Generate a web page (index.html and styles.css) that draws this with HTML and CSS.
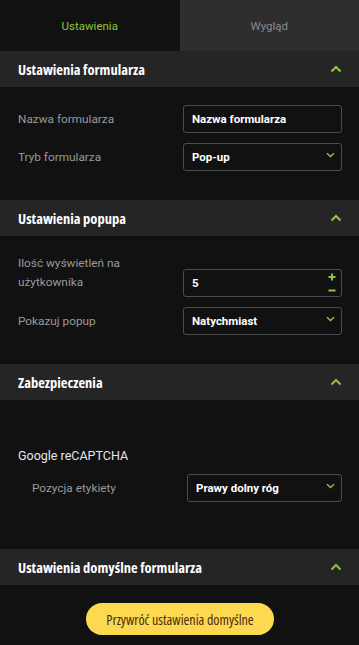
FILE: index.html
```html
<!DOCTYPE html>
<html lang="pl">
<head>
  <meta charset="UTF-8" />
  <title>Ustawienia formularza</title>
  <link rel="stylesheet" href="styles.css">
</head>
<body>
  <div class="panel">
    <!-- Tabs -->
    <div class="tabs">
      <div class="tab active">Ustawienia</div>
      <div class="tab">Wygląd</div>
    </div>

    <!-- Form settings -->
    <section class="group">
      <div class="group-head">
        <h2>Ustawienia formularza</h2>
        <svg class="chev-up" width="12" height="8" viewBox="0 0 12 8"><path d="M1.5 6.5 L6 2 L10.5 6.5" /></svg>
      </div>
      <div class="group-body">
        <div class="field">
          <div class="label">Nazwa formularza</div>
          <div class="control">Nazwa formularza</div>
        </div>
        <div class="field">
          <div class="label">Tryb formularza</div>
          <div class="control select">Pop-up
            <svg class="chev-down" width="9" height="6" viewBox="0 0 9 6"><path d="M1 1.2 L4.5 4.6 L8 1.2" /></svg>
          </div>
        </div>
      </div>
    </section>

    <!-- Popup settings -->
    <section class="group">
      <div class="group-head">
        <h2>Ustawienia popupa</h2>
        <svg class="chev-up" width="12" height="8" viewBox="0 0 12 8"><path d="M1.5 6.5 L6 2 L10.5 6.5" /></svg>
      </div>
      <div class="group-body">
        <div class="field tall">
          <div class="label">Ilość wyświetleń na użytkownika</div>
          <div class="control number">5
            <div class="stepper">
              <svg width="8" height="8" viewBox="0 0 8 8"><path d="M4 0.5 V7.5 M0.5 4 H7.5" /></svg>
              <svg width="8" height="3" viewBox="0 0 8 3"><path d="M0.5 1.5 H7.5" /></svg>
            </div>
          </div>
        </div>
        <div class="field">
          <div class="label">Pokazuj popup</div>
          <div class="control select">Natychmiast
            <svg class="chev-down" width="9" height="6" viewBox="0 0 9 6"><path d="M1 1.2 L4.5 4.6 L8 1.2" /></svg>
          </div>
        </div>
      </div>
    </section>

    <!-- Security -->
    <section class="group">
      <div class="group-head">
        <h2>Zabezpieczenia</h2>
        <svg class="chev-up" width="12" height="8" viewBox="0 0 12 8"><path d="M1.5 6.5 L6 2 L10.5 6.5" /></svg>
      </div>
      <div class="group-body security">
        <div class="sub-title">Google reCAPTCHA</div>
        <div class="field nested">
          <div class="label">Pozycja etykiety</div>
          <div class="control select">Prawy dolny róg
            <svg class="chev-down" width="9" height="6" viewBox="0 0 9 6"><path d="M1 1.2 L4.5 4.6 L8 1.2" /></svg>
          </div>
        </div>
      </div>
    </section>

    <!-- Defaults -->
    <section class="group">
      <div class="group-head">
        <h2>Ustawienia domyślne formularza</h2>
        <svg class="chev-up" width="12" height="8" viewBox="0 0 12 8"><path d="M1.5 6.5 L6 2 L10.5 6.5" /></svg>
      </div>
      <div class="group-body defaults">
        <button class="reset">Przywróć ustawienia domyślne</button>
      </div>
    </section>
  </div>
</body>
</html>
```
FILE: styles.css
```css
/********************************************************
 * Base
 ********************************************************/
body {
  margin: 0;
  background-color: #111111;
  font-family: Roboto, "Noto Sans", sans-serif;
  color: #fff;
}

.panel {
  width: 359px;
  height: 645px;
  overflow: hidden;
}

/********************************************************
 * Tabs
 ********************************************************/
.tabs {
  display: flex;
  height: 51px;
}
.tab {
  flex: 1;
  display: flex;
  align-items: center;
  justify-content: center;
  font-size: 11.5px;
  color: #8a8a8a;
  background-color: #2e2e2e;
  padding-top: 1px;
}
.tab.active {
  color: #8dc63f;
  background-color: #111111;
}

/********************************************************
 * Collapsible groups
 ********************************************************/
.group-head {
  height: 36px;
  display: flex;
  align-items: center;
  justify-content: space-between;
  padding: 0 17px 0 18px;
  background-color: #252525;
}
.group-head h2 {
  margin: 0;
  font-family: "Open Sans", sans-serif;
  font-stretch: condensed;
  font-weight: 700;
  font-size: 14.5px;
  color: #fff;
}
.chev-up path {
  fill: none;
  stroke: #8dc63f;
  stroke-width: 2;
}

.group-body {
  display: flex;
  flex-direction: column;
  gap: 10px;
  padding: 18px 17px 29px 18px;
}

/********************************************************
 * Fields
 ********************************************************/
.field {
  display: flex;
  align-items: center;
  justify-content: space-between;
}
.field.tall {
  align-items: flex-end;
}
.field.tall .label {
  width: 150px;
  line-height: 19px;
  padding-bottom: 5px;
}
.field.nested {
  padding-left: 14px;
}

.label {
  font-size: 11.8px;
  color: #9a9a9a;
}

.control {
  position: relative;
  box-sizing: border-box;
  width: 159px;
  height: 28px;
  display: flex;
  align-items: center;
  padding: 0 8px;
  border: 1px solid #4c4c4c;
  border-radius: 3px;
  font-size: 11.5px;
  font-weight: 700;
  color: #fff;
}
.nested .control {
  width: 155px;
}

.chev-down {
  position: absolute;
  right: 6px;
  top: 8px;
}
.chev-down path {
  fill: none;
  stroke: #8dc63f;
  stroke-width: 1.4;
}

.stepper {
  position: absolute;
  right: 5px;
  top: 3px;
  display: flex;
  flex-direction: column;
  gap: 8px;
}
.stepper path {
  fill: none;
  stroke: #8dc63f;
  stroke-width: 2;
}

/********************************************************
 * Security + defaults
 ********************************************************/
.group-body.security {
  padding-top: 47px;
  padding-bottom: 47px;
  gap: 9px;
}
.sub-title {
  font-size: 12.5px;
  line-height: 18px;
  color: #e6e6e6;
}

.group-body.defaults {
  align-items: center;
  padding-bottom: 10px;
}
.reset {
  width: 188px;
  height: 32px;
  border: none;
  border-radius: 16px;
  background-color: #fdd94f;
  color: #4a2a1a;
  font-family: "Open Sans", sans-serif;
  font-stretch: condensed;
  font-size: 14px;
  cursor: pointer;
}
```
